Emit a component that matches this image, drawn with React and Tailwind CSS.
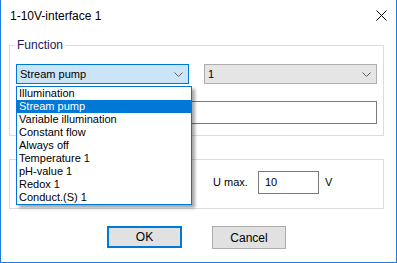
const items = [
  'Illumination',
  'Stream pump',
  'Variable illumination',
  'Constant flow',
  'Always off',
  'Temperature 1',
  'pH-value 1',
  'Redox 1',
  'Conduct.(S) 1',
];

function Chevron() {
  return (
    <svg width="9" height="5" viewBox="0 0 9 5" className="shrink-0">
      <path d="M0.5 0.5 L4.5 4.5 L8.5 0.5" fill="none" stroke="#5f5f5f" strokeWidth="1" />
    </svg>
  );
}

export default function App() {
  return (
    <div
      className="relative w-[397px] h-[263px] bg-white border-l border-r border-b border-[#1c7ed6] text-[11px] text-black overflow-hidden"
      style={{ fontFamily: '"Liberation Sans", Arial, sans-serif' }}
    >
      {/* Title bar */}
      <div className="flex items-center justify-between h-[31px] pl-[9px] pr-[9px]">
        <span className="text-[12px]">1-10V-interface 1</span>
        <svg width="11" height="11" viewBox="0 0 11 11">
          <path d="M0.5 0.5 L10.5 10.5 M10.5 0.5 L0.5 10.5" stroke="#000" strokeWidth="1" />
        </svg>
      </div>

      <div className="pl-[8px]">
        {/* Function group */}
        <div className="relative mt-[14px] w-[375px] h-[91px] border border-[#dcdcdc] pt-[18px] pl-[6px]">
          <span className="absolute -top-[8px] left-[5px] bg-white px-[2px] text-[12px] leading-[14px] text-[#1a1a5c]">
            Function
          </span>
          <div className="flex gap-[15px]">
            <div className="flex items-center justify-between w-[173px] h-[20px] border border-[#0078d7] bg-[#cce4f7] pl-[3px] pr-[5px]">
              <span>Stream pump</span>
              <Chevron />
            </div>
            <div className="flex items-center justify-between w-[173px] h-[20px] border border-[#adadad] bg-[#e5e5e5] pl-[3px] pr-[5px]">
              <span>1</span>
              <Chevron />
            </div>
          </div>
          <div className="mt-[17px] w-[361px] h-[23px] border border-[#7a7a7a] bg-white" />
        </div>

        {/* Output group */}
        <div className="mt-[23px] w-[375px] h-[50px] border border-[#dcdcdc] pt-[11px] pl-[203px] flex items-start">
          <div className="flex items-center h-[23px]">
            <span className="w-[45px]">U max.</span>
            <div className="w-[61px] h-[23px] border border-[#7a7a7a] pl-[6px] pt-[2px]">10</div>
            <span className="ml-[6px]">V</span>
          </div>
        </div>

        {/* Buttons */}
        <div className="flex gap-[30px] mt-[17px] pl-[98px]">
          <button className="w-[75px] h-[22px] border-2 border-[#0078d7] bg-[#e1e1e1] text-[12px]">OK</button>
          <button className="w-[74px] h-[23px] border border-[#adadad] bg-[#e1e1e1] text-[12px]">Cancel</button>
        </div>
      </div>

      {/* Open dropdown list */}
      <div className="absolute top-[86px] left-[15px] w-[176px] border border-[#0078d7] bg-white shadow-[3px_3px_3px_rgba(0,0,0,0.35)]">
        {items.map((item, i) => (
          <div
            key={item}
            className={
              'h-[13px] leading-[13px] pl-[2px] ' + (i === 1 ? 'bg-[#0078d7] text-white' : '')
            }
          >
            {item}
          </div>
        ))}
      </div>
    </div>
  );
}
